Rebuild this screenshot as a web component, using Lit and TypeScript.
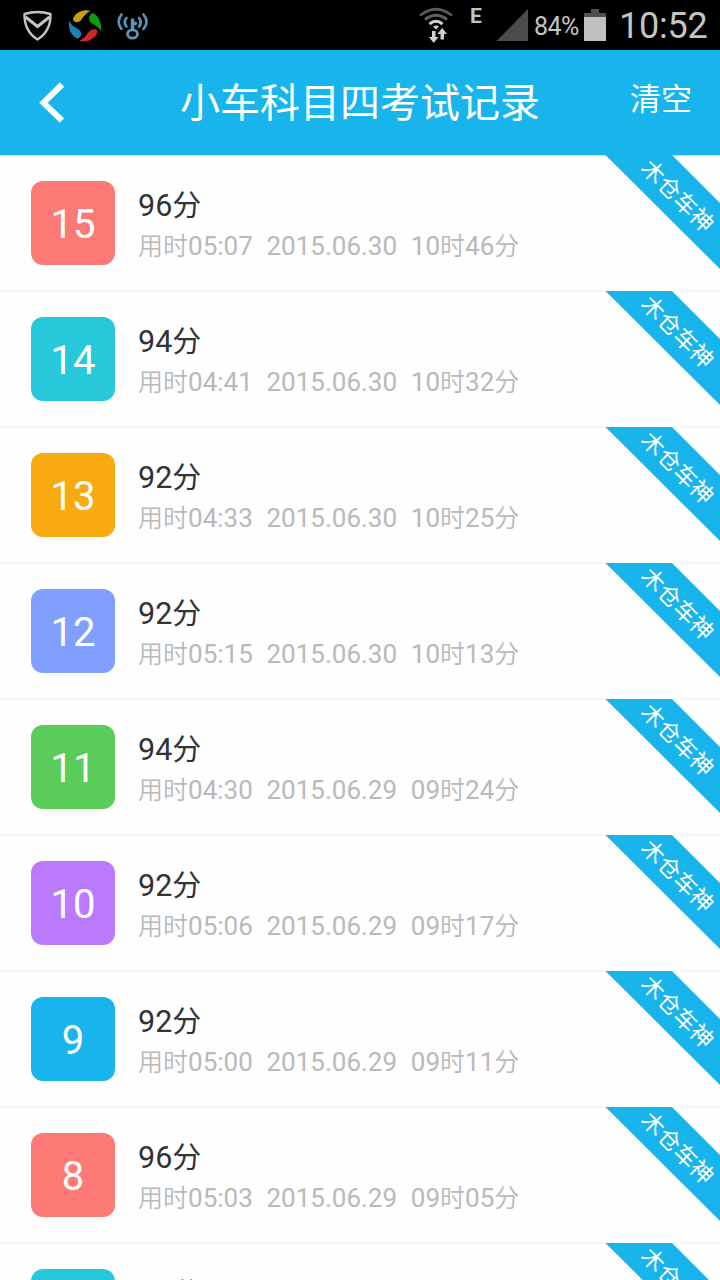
import { LitElement, html, css } from "lit";
import { customElement, property } from "lit/decorators.js";

interface ExamRecord {
  index: number;
  score: number;
  used: string;
  date: string;
  hour: string;
  minute: string;
}

const RECORDS: ExamRecord[] = [
  { index: 15, score: 96, used: "05:07", date: "2015.06.30", hour: "10", minute: "46" },
  { index: 14, score: 94, used: "04:41", date: "2015.06.30", hour: "10", minute: "32" },
  { index: 13, score: 92, used: "04:33", date: "2015.06.30", hour: "10", minute: "25" },
  { index: 12, score: 92, used: "05:15", date: "2015.06.30", hour: "10", minute: "13" },
  { index: 11, score: 94, used: "04:30", date: "2015.06.29", hour: "09", minute: "24" },
  { index: 10, score: 92, used: "05:06", date: "2015.06.29", hour: "09", minute: "17" },
  { index: 9, score: 92, used: "05:00", date: "2015.06.29", hour: "09", minute: "11" },
  { index: 8, score: 96, used: "05:03", date: "2015.06.29", hour: "09", minute: "05" },
  { index: 7, score: 94, used: "05:10", date: "2015.06.29", hour: "08", minute: "58" },
];

const COLORS = ["#fd7976", "#26c8d9", "#faaa11", "#809fff", "#59cc59", "#ba7afb", "#18b4ec"];

@customElement("status-bar")
export class StatusBar extends LitElement {
  static styles = css`
    :host {
      display: flex;
      height: 50px;
      background: #000;
      color: #c4c4c4;
      font-family: Roboto, sans-serif;
      line-height: 50px;
    }
    svg { display: block; flex: none; }
    .gap { flex: 1; }
    .net { font-size: 21px; font-weight: 700; line-height: 33px; width: 26px; }
    .percent { font-size: 25px; line-height: 54px; width: 50px; letter-spacing: -0.6px; }
    .clock { font-size: 36px; line-height: 52px; width: 101px; letter-spacing: -0.2px; }
  `;

  render() {
    return html`
      <svg width="160" height="50" viewBox="0 0 160 50" fill="none">
        <path d="M24.500 14 Q37.500 10 50.500 14 Q51 31 37.500 39.500 Q24 31 24.500 14Z" stroke="#c4c4c4" stroke-width="2.400" stroke-linejoin="round"/>
        <path d="M25.500 17 L37.500 26.500 L49.500 17" stroke="#c4c4c4" stroke-width="3"/>
        <path d="M73 19 C75 13 83 8.500 90.500 11 C88 12 84 15 81.500 19.500 C79 23.500 73.500 23 73 19Z" fill="#c7a20c"/>
        <path d="M93 13 C99 16 102 24 101 31 C99 28 96 25.500 92 23.500 C87.500 21 88.500 14 93 13Z" fill="#0c9a10"/>
        <path d="M97.500 31 C97 37.500 88 43.500 79 41 C83 39 85.500 36.500 88 33 C91 28.500 97 28.500 97.500 31Z" fill="#cf2626"/>
        <path d="M69.500 20.500 C70.500 24 73 26.500 78 29 C83 31.500 81.500 38.500 77 38.500 C71 36 67.500 27.500 69.500 20.500Z" fill="#1b83b4"/>
        <g stroke="#5796bb" stroke-width="2.600" stroke-linecap="round">
          <path d="M121.500 14.500 Q116 21.500 121.500 29M126.500 18 Q123 22 126.500 26.500M143.500 14.500 Q149.500 21.500 143.500 29M139 18 Q142.500 22 139 26.500"/>
          <ellipse cx="132.500" cy="34" rx="5" ry="4.200" stroke-width="2.800"/>
          <path d="M132.500 29 V20 M133.500 23.500 H135.500" stroke-width="3.600"/>
        </g>
      </svg>
      <div class="gap"></div>
      <svg width="55" height="50" viewBox="415 0 55 50" fill="none">
        <path d="M420 15.500 Q436 3 452 15.500" stroke="#5a5a5a" stroke-width="2.800"/>
        <path d="M425 19.500 Q436 11 447 19.500" stroke="#5f5f5f" stroke-width="3"/>
        <path d="M429.500 24 Q436 18.500 442.500 24" stroke="#d0d0d0" stroke-width="3"/>
        <path d="M433 26.500 Q436 24.500 439 26.500 L436 29.500Z" fill="#d0d0d0"/>
        <path d="M432 31 h3.500 v6 h3 l-4.800 6 -4.800-6 h3.100Z M440.500 39.500 h3.500 v-5.500 h3 l-4.800-6 -4.800 6 h3.100Z" fill="#d0d0d0"/>
      </svg>
      <div class="net">E</div>
      <svg width="38" height="50" viewBox="496 0 38 50">
        <path d="M496.500 41 L528 9 V41Z" fill="#4b4b4b"/>
      </svg>
      <div class="percent">84%</div>
      <svg width="35" height="50" viewBox="584 0 35 50">
        <path d="M584 13 h7 V9 h8 v4 h7 v4 h-22Z" fill="#505050"/>
        <path d="M584 17 h22 v24 h-22Z" fill="#c0c0c0"/>
      </svg>
      <div class="clock">10:52</div>
    `;
  }
}

@customElement("title-bar")
export class TitleBar extends LitElement {
  static styles = css`
    :host {
      display: grid;
      grid-template-columns: 160px 1fr 160px;
      height: 105px;
      background: #18b4ec;
      box-shadow: 0 1px #a2effb;
      color: #fff;
      font-family: Roboto, "Noto Sans CJK SC", sans-serif;
    }
    svg { display: block; }
    .title { text-align: center; font-size: 40px; line-height: 108px; white-space: nowrap; }
    .clear { text-align: right; padding-right: 28px; font-size: 31px; line-height: 100px; }
  `;

  render() {
    return html`
      <svg width="160" height="105" viewBox="0 0 160 105" fill="none">
        <path d="M62 34.500 L43.500 52.800 L62 70.500" stroke="#fff" stroke-width="6"/>
      </svg>
      <div class="title">小车科目四考试记录</div>
      <div class="clear">清空</div>
    `;
  }
}

@customElement("record-row")
export class RecordRow extends LitElement {
  @property({ attribute: false }) record!: ExamRecord;
  @property() color = "";

  static styles = css`
    :host {
      display: flex;
      box-sizing: border-box;
      height: 136px;
      border-bottom: 1px solid #f6f6f6;
      box-shadow: 0 1px #f8f8f8;
      font-family: Roboto, "Noto Sans CJK SC", sans-serif;
    }
    .badge {
      flex: none;
      width: 84px;
      height: 84px;
      margin: 26px 23px 0 31px;
      border-radius: 12px;
      color: #fff;
      font-size: 40px;
      line-height: 88px;
      text-align: center;
    }
    .info { flex: 1; padding-top: 31px; }
    .score { color: #333; font-size: 30.5px; line-height: 40px; height: 40px; }
    .score span { font-size: 29px; }
    .detail { color: #b9b9b9; font-size: 26px; line-height: 40px; height: 40px; word-spacing: 0.4px; white-space: pre; }
    .detail span { font-size: 25px; font-weight: 350; }
    svg { display: block; flex: none; }
    .ribbon-text { fill: #fff; font-size: 22.8px; text-anchor: middle; }
  `;

  render() {
    const r = this.record;
    return html`
      <div class="badge" style="background:${this.color}">${r.index}</div>
      <div class="info">
        <div class="score">${r.score}<span>分</span></div>
        <div class="detail"><span>用时</span>${r.used}  ${r.date}  ${r.hour}<span>时</span>${r.minute}<span>分</span></div>
      </div>
      <svg width="115" height="115" viewBox="0 0 115 115">
        <path d="M0.500 0 H67 L115 48 V114Z" fill="#18b4ec"/>
        <text class="ribbon-text" transform="translate(72.500 41) rotate(45)" y="8">木仓车神</text>
      </svg>
    `;
  }
}

@customElement("app-root")
export class AppRoot extends LitElement {
  static styles = css`
    :host {
      display: flex;
      flex-direction: column;
      height: 1280px;
      overflow: hidden;
      background: #fefefe;
    }
    status-bar, title-bar { flex: none; }
    .list { flex: 1; min-height: 0; }
  `;

  render() {
    return html`
      <status-bar></status-bar>
      <title-bar></title-bar>
      <div class="list">
        ${RECORDS.map((r, i) => html`<record-row .record=${r} .color=${COLORS[i % COLORS.length]}></record-row>`)}
      </div>
    `;
  }
}
